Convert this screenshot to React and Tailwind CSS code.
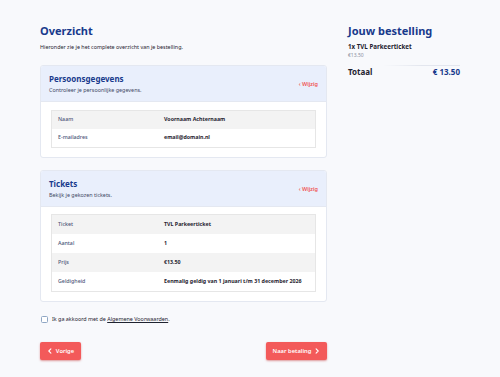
import React from 'react';

const Chevron = ({ dir = 'right', className = '' }) => (
  <svg viewBox="0 0 10 10" className={className} fill="none" stroke="currentColor" strokeWidth="1.8" strokeLinecap="round" strokeLinejoin="round">
    {dir === 'right' ? <path d="M3.5 1.5 L7 5 L3.5 8.5" /> : <path d="M6.5 1.5 L3 5 L6.5 8.5" />}
  </svg>
);

const DataTable = ({ rows, rowH }) => (
  <div className="border border-[#e6e6e6]">
    <table className="w-full border-collapse">
      <tbody>
        {rows.map((r, i) => (
          <tr key={r.label} className={i % 2 === 0 ? 'bg-[#f3f3f3]' : 'bg-white'}>
            <td className={`${rowH} w-[106px] pl-[6px] p-0 text-[5.3px] font-medium text-[#4b5578]`}>{r.label}</td>
            <td className={`${rowH} pl-[6px] p-0 text-[5.3px] font-bold text-[#1f2330]`}>{r.value}</td>
          </tr>
        ))}
      </tbody>
    </table>
  </div>
);

const Card = ({ title, subtitle, rows, rowH, bodyPt }) => (
  <div className="rounded-[3px] border border-[#e4e8f1] bg-white overflow-hidden">
    <div className="h-[36px] bg-[#e9effc] border-b border-[#e4e8f1] flex items-center justify-between pl-[8px] pr-[8px]">
      <div className="flex flex-col">
        <div className="text-[8px] leading-[11px] font-bold text-[#183a8c]">{title}</div>
        <div className="mt-[2px] text-[5.4px] leading-[9px] text-[#3f4863]">{subtitle}</div>
      </div>
      <div className="text-[5.5px] font-semibold text-[#f05656] pt-[1px]">‹ Wijzig</div>
    </div>
    <div className={`px-[10px] ${bodyPt} pb-[9px]`}>
      <DataTable rows={rows} rowH={rowH} />
    </div>
  </div>
);

export default function App() {
  const persoon = [
    { label: 'Naam', value: 'Voornaam Achternaam' },
    { label: 'E-mailadres', value: 'email@domain.nl' },
  ];
  const tickets = [
    { label: 'Ticket', value: 'TVL Parkeerticket' },
    { label: 'Aantal', value: '1' },
    { label: 'Prijs', value: '€13.50' },
    { label: 'Geldigheid', value: 'Eenmalig geldig van 1 januari t/m 31 december 2026' },
  ];

  return (
    <div className="w-[500px] h-[377px] bg-[#f8f9fc] overflow-hidden" style={{ fontFamily: '"Noto Sans", "Open Sans", sans-serif' }}>
      <div className="flex pl-[40px] pt-[24px] gap-[21px]">
        <div className="w-[287px] flex flex-col">
          <h1 className="text-[11px] leading-[14px] font-bold text-[#183a8c]">Overzicht</h1>
          <p className="mt-[4px] text-[5.4px] leading-[10px] text-[#1f2330]">Hieronder zie je het complete overzicht van je bestelling.</p>

          <div className="mt-[13px]">
            <Card title="Persoonsgegevens" subtitle="Controleer je persoonlijke gegevens." rows={persoon} rowH="h-[18px]" bodyPt="pt-[8px]" />
          </div>
          <div className="mt-[12px]">
            <Card title="Tickets" subtitle="Bekijk je gekozen tickets." rows={tickets} rowH="h-[19px]" bodyPt="pt-[7px]" />
          </div>

          <label className="mt-[13px] flex items-center gap-[4px] h-[8px]">
            <span className="ml-[1px] w-[7px] h-[7px] rounded-[1.5px] border border-[#8fa6c4] bg-white" />
            <span className="text-[5.4px] leading-[8px] text-[#1f2330]">
              Ik ga akkoord met de <span className="underline">Algemene Voorwaarden</span>.
            </span>
          </label>

          <div className="mt-[19px] flex justify-between">
            <button className="h-[18px] w-[41px] rounded-[2px] bg-[#f35a5a] text-white text-[5.8px] font-semibold flex items-center justify-center gap-[3px] shadow-[0_1px_2px_rgba(200,60,60,0.5)]">
              <Chevron dir="left" className="w-[6px] h-[6px]" />
              Vorige
            </button>
            <button className="h-[18px] w-[61px] rounded-[2px] bg-[#f35a5a] text-white text-[5.8px] font-semibold flex items-center justify-center gap-[3px] shadow-[0_1px_2px_rgba(200,60,60,0.5)]">
              Naar betaling
              <Chevron dir="right" className="w-[6px] h-[6px]" />
            </button>
          </div>
        </div>

        <div className="w-[112px] flex flex-col">
          <h2 className="text-[11px] leading-[14px] font-bold text-[#183a8c]">Jouw bestelling</h2>
          <div className="mt-[5px] text-[6.2px] leading-[8px] font-bold text-[#1f2330]">1x TVL Parkeerticket</div>
          <div className="text-[5px] leading-[8px] text-[#8a8f9c]">€13.50</div>
          <div className="mt-[6px] ml-[35px] h-px bg-gradient-to-r from-transparent via-[#e3e6ee] to-[#e3e6ee]" />
          <div className="flex justify-between items-center h-[11px]">
            <span className="text-[8px] font-bold text-[#1f2330]">Totaal</span>
            <span className="text-[8px] font-bold text-[#183a8c]">€ 13.50</span>
          </div>
        </div>
      </div>
    </div>
  );
}
